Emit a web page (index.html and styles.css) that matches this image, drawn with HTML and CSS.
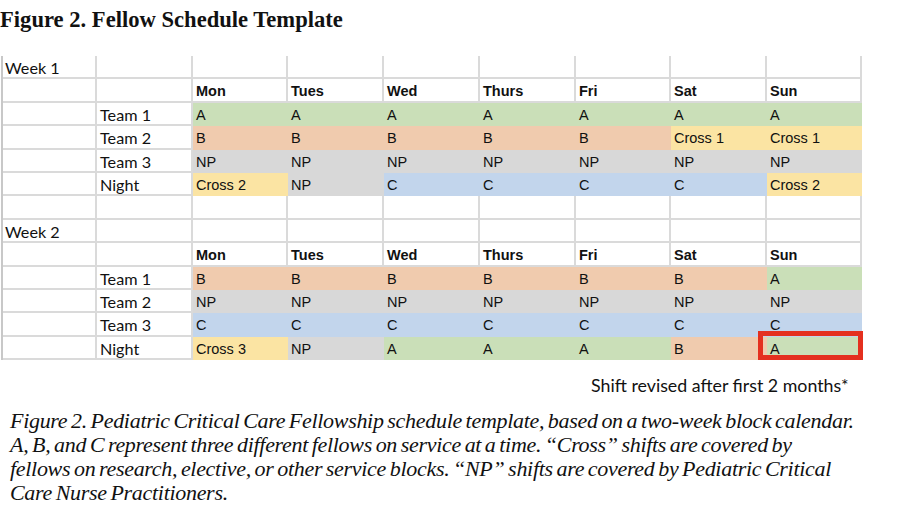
FILE: index.html
```html
<!DOCTYPE html>
<html>
<head>
<meta charset="utf-8">
<link rel="stylesheet" href="styles.css">
</head>
<body>
<h1 class="title">Figure 2. Fellow Schedule Template</h1>
<div class="sheet">
  <div class="c lab">Week 1</div><div class="c"></div><div class="c"></div><div class="c"></div><div class="c"></div><div class="c"></div><div class="c"></div><div class="c"></div><div class="c"></div>
  <div class="c"></div><div class="c"></div><div class="c h">Mon</div><div class="c h">Tues</div><div class="c h">Wed</div><div class="c h">Thurs</div><div class="c h">Fri</div><div class="c h">Sat</div><div class="c h">Sun</div>
  <div class="c"></div><div class="c t">Team 1</div><div class="c g">A</div><div class="c g">A</div><div class="c g">A</div><div class="c g">A</div><div class="c g">A</div><div class="c g">A</div><div class="c g">A</div>
  <div class="c"></div><div class="c t">Team 2</div><div class="c o">B</div><div class="c o">B</div><div class="c o">B</div><div class="c o">B</div><div class="c o">B</div><div class="c y">Cross 1</div><div class="c y">Cross 1</div>
  <div class="c"></div><div class="c t">Team 3</div><div class="c n">NP</div><div class="c n">NP</div><div class="c n">NP</div><div class="c n">NP</div><div class="c n">NP</div><div class="c n">NP</div><div class="c n">NP</div>
  <div class="c"></div><div class="c t">Night</div><div class="c y">Cross 2</div><div class="c n">NP</div><div class="c b">C</div><div class="c b">C</div><div class="c b">C</div><div class="c b">C</div><div class="c y">Cross 2</div>
  <div class="c"></div><div class="c"></div><div class="c"></div><div class="c"></div><div class="c"></div><div class="c"></div><div class="c"></div><div class="c"></div><div class="c"></div>
  <div class="c lab">Week 2</div><div class="c"></div><div class="c"></div><div class="c"></div><div class="c"></div><div class="c"></div><div class="c"></div><div class="c"></div><div class="c"></div>
  <div class="c"></div><div class="c"></div><div class="c h">Mon</div><div class="c h">Tues</div><div class="c h">Wed</div><div class="c h">Thurs</div><div class="c h">Fri</div><div class="c h">Sat</div><div class="c h">Sun</div>
  <div class="c"></div><div class="c t">Team 1</div><div class="c o">B</div><div class="c o">B</div><div class="c o">B</div><div class="c o">B</div><div class="c o">B</div><div class="c o">B</div><div class="c g">A</div>
  <div class="c"></div><div class="c t">Team 2</div><div class="c n">NP</div><div class="c n">NP</div><div class="c n">NP</div><div class="c n">NP</div><div class="c n">NP</div><div class="c n">NP</div><div class="c n">NP</div>
  <div class="c"></div><div class="c t">Team 3</div><div class="c b">C</div><div class="c b">C</div><div class="c b">C</div><div class="c b">C</div><div class="c b">C</div><div class="c b">C</div><div class="c b">C</div>
  <div class="c"></div><div class="c t">Night</div><div class="c y">Cross 3</div><div class="c n">NP</div><div class="c g">A</div><div class="c g">A</div><div class="c g">A</div><div class="c o">B</div><div class="c g revised">A</div>
</div>
<p class="note">Shift revised after first 2 months*</p>
<p class="caption">Figure 2. Pediatric Critical Care Fellowship schedule template, based on a two-week block calendar.<br>A, B, and C represent three different fellows on service at a time. “Cross” shifts are covered by<br>fellows on research, elective, or other service blocks. “NP” shifts are covered by Pediatric Critical<br>Care Nurse Practitioners.</p>
</body>
</html>
```

FILE: styles.css
```css
html, body {
  margin: 0;
  padding: 0;
  background: #fff;
  width: 903px;
  height: 509px;
  overflow: hidden;
}

.title {
  margin: 0;
  padding: 7px 0 0 0;
  height: 56px;
  box-sizing: border-box;
  font-family: "Liberation Serif", serif;
  font-weight: bold;
  font-size: 22.6px;
  line-height: 26px;
  color: #111;
}

.sheet {
  display: grid;
  grid-template-columns: 94px 96px 95px 96px 96px 96px 95px 96px 95px;
  grid-auto-rows: 23.4px;
  margin-left: 1px;
  width: 860px;
  border-left: 2px solid #c8c8c8;
}

.c {
  box-sizing: border-box;
  border-right: 2px solid #dadada;
  border-bottom: 2px solid #dadada;
  padding: 3px 0 0 3px;
  font-family: "Liberation Sans", Arial, sans-serif;
  font-size: 14.5px;
  line-height: 18px;
  color: #111;
  white-space: nowrap;
}

.lab,
.t {
  font-family: "Lato", "Open Sans", sans-serif;
  font-size: 16.2px;
  line-height: 20px;
  padding: 2px 0 0 2px;
}

.t {
  padding-left: 3px;
}

.h {
  font-weight: bold;
}

.g { background: #cadfb8; border-color: #cadfb8; }
.o { background: #f0cbae; border-color: #f0cbae; }
.y { background: #fbe4a3; border-color: #fbe4a3; }
.n { background: #d8d8d8; border-color: #d8d8d8; }
.b { background: #c2d5ec; border-color: #c2d5ec; }

.revised {
  position: relative;
}

.revised::after {
  content: "";
  position: absolute;
  left: -9px;
  top: -6px;
  right: -3px;
  bottom: -2px;
  border: 5px solid #e4301f;
}

.note {
  margin: 14px 0 0 591px;
  font-family: "Lato", "Open Sans", sans-serif;
  font-size: 17.8px;
  line-height: 22px;
  color: #111;
}

.caption {
  margin: 13px 0 0 10px;
  font-family: "Liberation Serif", serif;
  font-style: italic;
  font-size: 22px;
  line-height: 24px;
  color: #111;
  letter-spacing: -0.3px;
  word-spacing: -1.5px;
  white-space: nowrap;
}
```
